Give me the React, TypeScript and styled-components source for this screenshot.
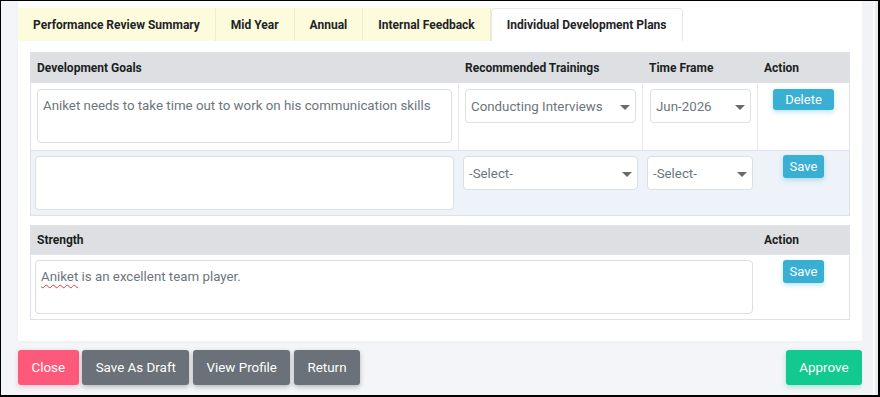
import styled, { createGlobalStyle, css } from 'styled-components';

const GlobalStyle = createGlobalStyle`
  * {
    box-sizing: border-box;
  }
  body {
    margin: 0;
    background: #ffffff;
    font-family: Roboto, 'Liberation Sans', sans-serif;
  }
`;

const Frame = styled.div`
  width: 880px;
  height: 397px;
  display: flex;
  overflow: hidden;
  border-style: solid;
  border-color: #000;
  border-width: 1px 2px 2px 1px;
  background: #f4f5f8;
`;

const Main = styled.main`
  flex: 1;
  min-width: 0;
  padding-left: 17px;
  display: flex;
  flex-direction: column;
`;

const ScrollTrack = styled.div`
  width: 16px;
  display: flex;
  background: #f2f3f6;
  padding-left: 9px;

  &::after {
    content: '';
    margin-left: 2px;
    flex: 1;
    background: #eaebef;
    border-left: 2px solid #fdfdfe;
  }
`;

const Card = styled.section`
  background: #fff;
  padding: 7px 0 21px;
  box-shadow: 0 1px 3px rgba(30, 40, 60, 0.04);
`;

const TabBar = styled.nav`
  display: flex;
  height: 33px;
`;

const Tab = styled.div<{ $active?: boolean }>`
  display: flex;
  align-items: center;
  padding: 0 15px;
  font-size: 12px;
  font-weight: 700;
  color: #1f2327;
  background: #fcfcdc;
  border-right: 1px solid #eeedc6;

  ${(p) =>
    p.$active &&
    css`
      background: #fff;
      border: 1px solid #e5e7eb;
      border-bottom: none;
      border-radius: 4px 4px 0 0;
    `}
`;

const Content = styled.div`
  padding: 11px 12px 0;
  display: flex;
  flex-direction: column;
  gap: 9px;
`;

const Table = styled.div`
  border: 1px solid #dfe2e6;
`;

const Row = styled.div<{ $cols: string; $height: number; $alt?: boolean; $head?: boolean }>`
  display: grid;
  grid-template-columns: ${(p) => p.$cols};
  height: ${(p) => p.$height}px;
  background: ${(p) => (p.$head ? '#dddfe2' : p.$alt ? '#eef2f9' : '#fff')};
  border-top: ${(p) => (p.$head ? 'none' : '1px solid #dfe2e6')};
`;

const HeadCell = styled.div`
  display: flex;
  align-items: center;
  padding: 0 6px;
  font-size: 12px;
  font-weight: 700;
  color: #1b1f23;
`;

const Cell = styled.div<{ $pad: string; $divider?: boolean; $center?: boolean }>`
  padding: ${(p) => p.$pad};
  border-right: ${(p) => (p.$divider ? '1px solid #e6e8eb' : 'none')};
  text-align: ${(p) => (p.$center ? 'center' : 'left')};
`;

const TextBox = styled.div`
  height: 54px;
  border: 1px solid #dcdfe3;
  border-radius: 4px;
  background: #fff;
  padding: 6px 5px;
  font-size: 13.3px;
  line-height: 20px;
  color: #6c757d;
`;

const Misspelt = styled.span`
  text-decoration: underline wavy #e0413a;
  text-decoration-thickness: 1px;
  text-underline-offset: 3px;
`;

const SelectBox = styled.div`
  height: 34px;
  display: flex;
  align-items: center;
  justify-content: space-between;
  padding: 0 5px 0 5px;
  border: 1px solid #dcdfe3;
  border-radius: 4px;
  background: #fff;
  font-size: 13.3px;
  color: #6c757d;
  white-space: nowrap;

  svg {
    flex-shrink: 0;
    margin-top: 2px;
  }
`;

const SmallButton = styled.button<{ $wide?: boolean }>`
  height: ${(p) => (p.$wide ? 21 : 23)}px;
  padding: 0 ${(p) => (p.$wide ? 12 : 7)}px;
  border: none;
  border-radius: 3px;
  background: #38afd3;
  color: #fff;
  font-family: Roboto, 'Liberation Sans', sans-serif;
  font-size: 13px;
  line-height: 1;
  box-shadow: 0 2px 5px rgba(56, 175, 211, 0.35);
`;

const Footer = styled.footer`
  display: flex;
  justify-content: space-between;
  padding-top: 9px;
`;

const ButtonGroup = styled.div`
  display: flex;
  gap: 3.5px;
`;

const palette = {
  danger: { bg: '#fd5a7b', glow: 'rgba(253, 90, 123, 0.3)' },
  secondary: { bg: '#6a7179', glow: 'rgba(0, 0, 0, 0.25)' },
  success: { bg: '#12c98f', glow: 'rgba(18, 201, 143, 0.35)' },
};

const ActionButton = styled.button<{ $variant: keyof typeof palette }>`
  height: 35px;
  padding: 0 13.5px;
  border: none;
  border-radius: 3px;
  background: ${(p) => palette[p.$variant].bg};
  box-shadow: 0 2px 5px ${(p) => palette[p.$variant].glow};
  color: #fff;
  font-family: Roboto, 'Liberation Sans', sans-serif;
  font-size: 13.4px;
`;

function Caret() {
  return (
    <svg width="10" height="5" viewBox="0 0 10 5">
      <path d="M0 0h10L5 5z" fill="#6b6b6b" />
    </svg>
  );
}

function Select({ value }: { value: string }) {
  return (
    <SelectBox>
      <span>{value}</span>
      <Caret />
    </SelectBox>
  );
}

const goalCols = '428px 184px 115px 1fr';
const strengthCols = '727px 1fr';

const tabs = ['Performance Review Summary', 'Mid Year', 'Annual', 'Internal Feedback', 'Individual Development Plans'];

export default function App() {
  return (
    <>
      <GlobalStyle />
      <Frame>
        <Main>
          <Card>
            <TabBar>
              {tabs.map((t, i) => (
                <Tab key={t} $active={i === tabs.length - 1}>
                  {t}
                </Tab>
              ))}
            </TabBar>

            <Content>
              <Table>
                <Row $head $cols={goalCols} $height={29}>
                  <HeadCell>Development Goals</HeadCell>
                  <HeadCell>Recommended Trainings</HeadCell>
                  <HeadCell>Time Frame</HeadCell>
                  <HeadCell>Action</HeadCell>
                </Row>
                <Row $cols={goalCols} $height={68}>
                  <Cell $pad="6px 6px" $divider>
                    <TextBox>Aniket needs to take time out to work on his communication skills</TextBox>
                  </Cell>
                  <Cell $pad="6px 6px" $divider>
                    <Select value="Conducting Interviews" />
                  </Cell>
                  <Cell $pad="6px 6px 6px 7px" $divider>
                    <Select value="Jun-2026" />
                  </Cell>
                  <Cell $pad="6px 0" $center>
                    <SmallButton $wide>Delete</SmallButton>
                  </Cell>
                </Row>
                <Row $alt $cols={goalCols} $height={65}>
                  <Cell $pad="5px 5px 0 4px">
                    <TextBox />
                  </Cell>
                  <Cell $pad="5px 5px 0 4px">
                    <Select value="-Select-" />
                  </Cell>
                  <Cell $pad="5px 5px 0 4px">
                    <Select value="-Select-" />
                  </Cell>
                  <Cell $pad="4px 0 0" $center>
                    <SmallButton>Save</SmallButton>
                  </Cell>
                </Row>
              </Table>

              <Table>
                <Row $head $cols={strengthCols} $height={28}>
                  <HeadCell>Strength</HeadCell>
                  <HeadCell>Action</HeadCell>
                </Row>
                <Row $cols={strengthCols} $height={65}>
                  <Cell $pad="5px 5px 0 4px">
                    <TextBox>
                      <Misspelt>Aniket</Misspelt> is an excellent team player.
                    </TextBox>
                  </Cell>
                  <Cell $pad="5px 0 0" $center>
                    <SmallButton>Save</SmallButton>
                  </Cell>
                </Row>
              </Table>
            </Content>
          </Card>

          <Footer>
            <ButtonGroup>
              <ActionButton $variant="danger">Close</ActionButton>
              <ActionButton $variant="secondary">Save As Draft</ActionButton>
              <ActionButton $variant="secondary">View Profile</ActionButton>
              <ActionButton $variant="secondary">Return</ActionButton>
            </ButtonGroup>
            <ActionButton $variant="success">Approve</ActionButton>
          </Footer>
        </Main>
        <ScrollTrack />
      </Frame>
    </>
  );
}
